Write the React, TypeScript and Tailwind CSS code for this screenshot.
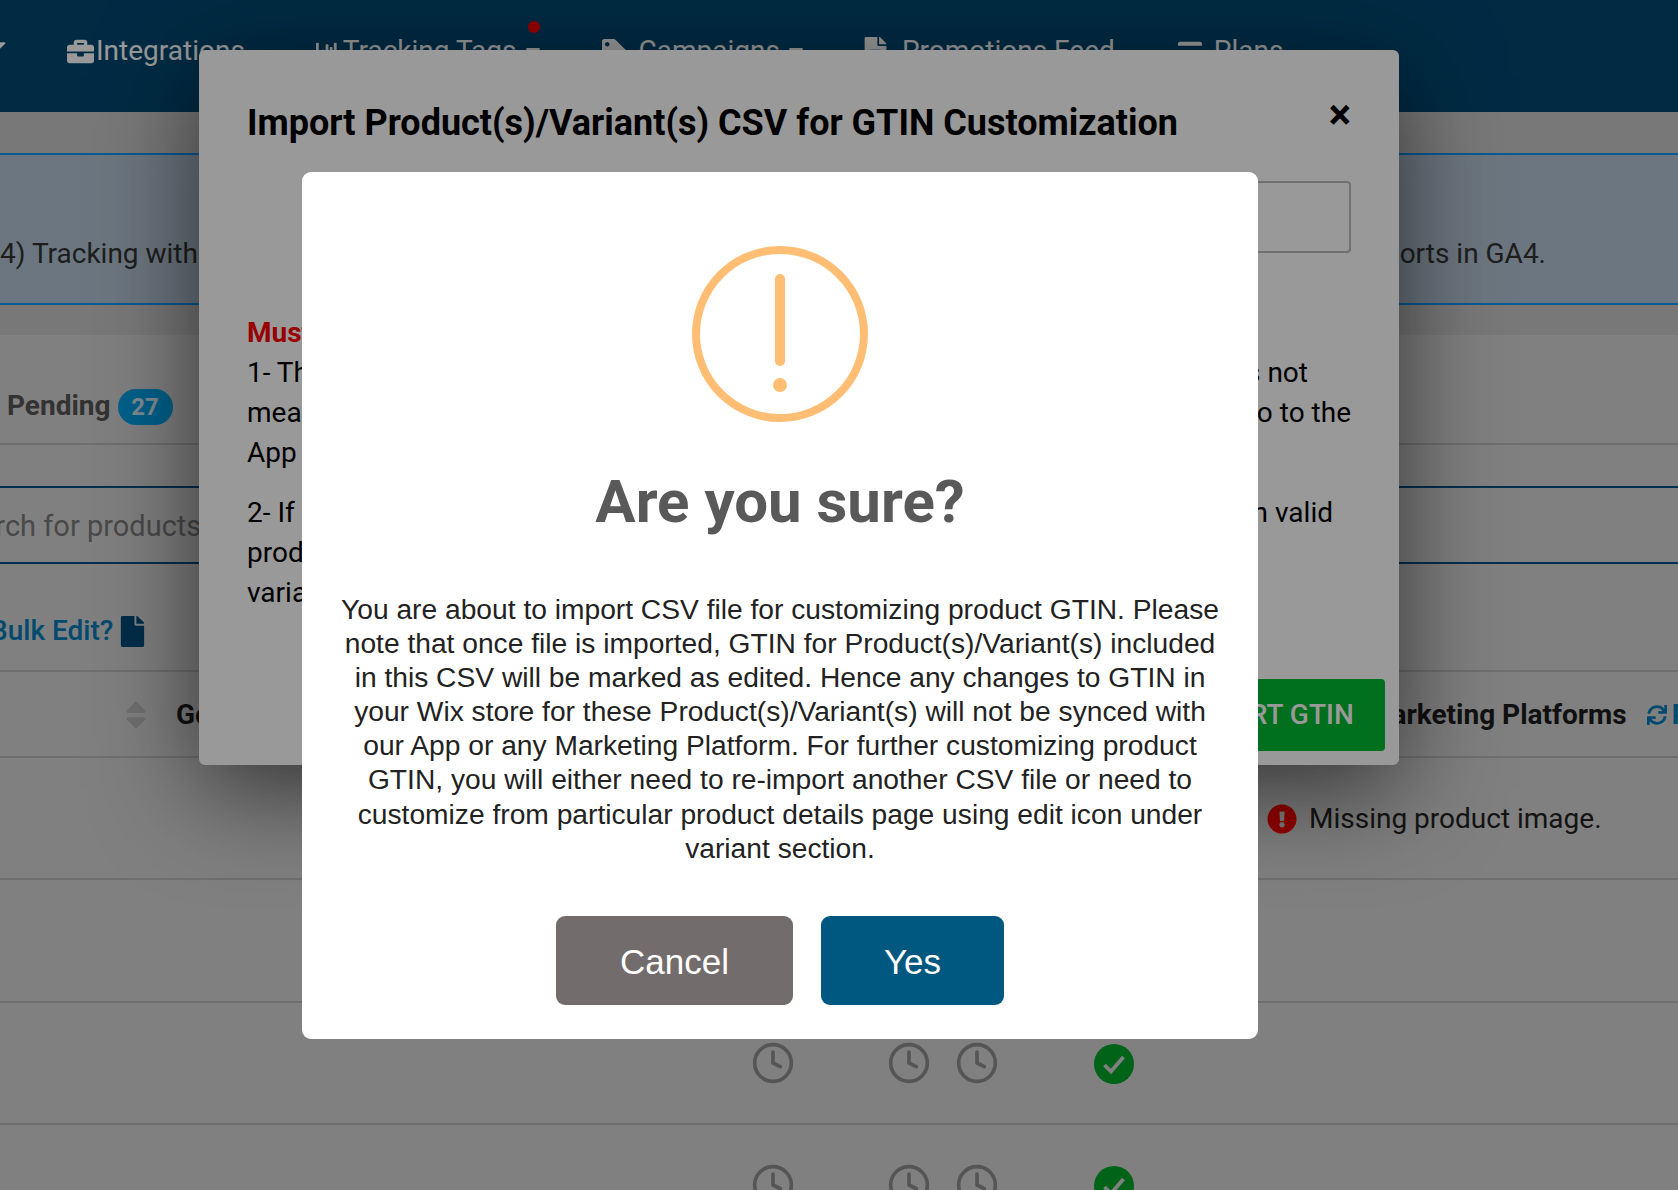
import { Clock } from "lucide-react";
import { FaBriefcase, FaCaretDown, FaChartBar, FaTag, FaFileAlt, FaCreditCard, FaFile, FaSync, FaSort, FaExclamationCircle } from "react-icons/fa";

function NavItem({ icon, label, caret, className }: { icon: React.ReactNode; label: string; caret?: boolean; className: string }) {
  return (
    <div className={`flex items-center text-[28px] text-white ${className}`}>
      {icon}
      <span>{label}</span>
      {caret && <FaCaretDown className="ml-1 text-[24px]" />}
    </div>
  );
}

function CheckBadge({ className }: { className: string }) {
  return (
    <svg width="40" height="40" viewBox="0 0 40 40" className={className}>
      <circle cx="20" cy="20" r="20" fill="#00a528" />
      <path d="M10.5 21l6.5 6.5L29.5 13" fill="none" stroke="#d5d5d5" strokeWidth="3.8" />
    </svg>
  );
}

function StatusRow({ className = "h-[122px]" }: { className?: string }) {
  return (
    <div className={`${className} border-b-2 border-[#b8b8b8] bg-[#d5d5d5] flex items-center pl-[751px] text-[#8e8e8e]`}>
      <Clock size={44} strokeWidth={2} />
      <Clock size={44} strokeWidth={2} className="ml-[92px]" />
      <Clock size={44} strokeWidth={2} className="ml-[24px]" />
      <CheckBadge className="ml-[95px] mt-[2px]" />
    </div>
  );
}

function SplitLine({ left, right, className = "" }: { left: string; right?: string; className?: string }) {
  return (
    <div className={`h-10 flex justify-between items-center whitespace-nowrap ${className}`}>
      <span>{left}</span>
      {right && <span>{right}</span>}
    </div>
  );
}

export default function App() {
  return (
    <div className="relative h-[1190px] w-full overflow-hidden bg-[#c9c9c9] font-['Roboto',sans-serif]">
      {/* Page */}
      <header className="h-[112px] bg-[#004871] flex items-start pt-[30px] whitespace-nowrap">
        <FaCaretDown className="ml-[-12px] mt-1 text-[22px] text-white" />
        <NavItem className="ml-[57px]" icon={<FaBriefcase className="mr-[2px] text-[27px]" />} label="Integrations" />
        <div className="relative ml-[71px]">
          <NavItem className="" icon={<FaChartBar className="mr-[5px] text-[22px]" />} label="Tracking Tags" caret />
          <span className="absolute right-[5px] top-[-9px] h-3 w-3 rounded-full bg-[#f90000]" />
        </div>
        <NavItem className="ml-[57px]" icon={<FaTag className="mr-[13px] text-[24px]" />} label="Campaigns" caret />
        <NavItem className="ml-[53px]" icon={<FaFileAlt className="mr-3 text-[29px]" />} label="Promotions Feed" />
        <NavItem className="ml-[63px]" icon={<FaCreditCard className="mr-3 text-[24px]" />} label="Plans" />
      </header>
      <div className="h-[41px]" />
      <section className="h-[152px] border-y-2 border-[#1196f7] bg-[#b4c5d5] flex items-center justify-between pt-[50px] pr-[132px] text-[28px] text-[#333] whitespace-nowrap">
        <span>4) Tracking with</span>
        <span>reports in GA4.</span>
      </section>
      <div className="h-[30px]" />
      <section className="bg-[#d5d5d5]">
        <div className="h-[110px] border-b-2 border-[#b8b8b8] flex items-center pl-[7px] pt-[34px] text-[28px] font-bold text-[#555]">
          Pending
          <span className="ml-[7px] mt-[2px] h-[36px] w-[55px] rounded-full bg-[#00a0e6] flex items-center justify-center text-[24px] text-[#d5e8f2]">27</span>
        </div>
        <div className="h-[41px]" />
        <div className="h-[78px] border-y-2 border-[#005085] flex items-center pt-1 text-[29px] text-[#7b7b7b] whitespace-nowrap ml-[-53px]">
          Search for products
        </div>
        <div className="h-[108px] border-b-2 border-[#b8b8b8] flex items-center pt-[28px] text-[28px] font-medium text-[#007cbb] whitespace-nowrap ml-[-10px]">
          Bulk Edit?
          <FaFile className="ml-1 text-[31px] text-[#004b7b]" />
        </div>
        <div className="h-[86px] overflow-hidden border-b-2 border-[#b8b8b8] flex items-center pt-[2px] whitespace-nowrap text-[28px] font-bold text-[#1c1c1c]">
          <FaSort className="ml-[119px] text-[34px] text-[#b9b9b9]" />
          <span className="ml-[23px]">Google</span>
          <span className="ml-auto">Marketing Platforms</span>
          <FaSync className="ml-5 text-[20px] text-[#007cbb] shrink-0" />
          <span className="ml-[5px] mr-[-92px] text-[#007cbb]">Refresh</span>
        </div>
        <div className="h-[122px] border-b-2 border-[#b8b8b8] flex items-center pl-[1267px] pt-[2px] text-[28px] text-[#222] whitespace-nowrap">
          <FaExclamationCircle size={30} className="mr-3 text-[#f90000]" />
          Missing product image.
        </div>
        <div className="h-[123px] border-b-2 border-[#b8b8b8]" />
        <StatusRow />
        <StatusRow />
      </section>

      {/* Import modal */}
      <div className="absolute left-[199px] top-[50px] h-[715px] w-[1200px] rounded-md bg-white shadow-[0_25px_100px_rgba(0,0,0,0.6)] px-[48px] text-black">
        <div className="flex justify-between pt-[50px]">
          <h2 className="text-[36px] leading-[46px] font-bold whitespace-nowrap">Import Product(s)/Variant(s) CSV for GTIN Customization</h2>
          <span className="mt-[-8px] mr-0 text-[42px] leading-[46px] font-bold">×</span>
        </div>
        <div className="mt-[35px] ml-auto h-[72px] w-[600px] rounded border-2 border-[#bbb]" />
        <div className="mt-[60px] text-[28px]">
          <SplitLine left="Must Read" className="font-bold text-[#ff0000]" />
          <SplitLine left="1- The" right="is not" className="pr-[43px]" />
          <SplitLine left="meaning" right="go to the" />
          <SplitLine left="App" className="mb-5" />
          <SplitLine left="2- If" right="in valid" className="pr-[18px]" />
          <SplitLine left="products" />
          <SplitLine left="variants" />
        </div>
        <div className="absolute right-[14px] top-[629px] flex h-[72px] w-[236px] items-center justify-center rounded bg-[#00b932] text-[28px] font-medium text-white">
          IMPORT GTIN
        </div>
      </div>

      {/* Dim layer */}
      <div className="absolute inset-0 bg-black/40" />

      {/* Confirm dialog */}
      <div className="absolute left-[302px] top-[172px] h-[867px] w-[956px] rounded-[9px] bg-white flex flex-col items-center pt-[74px]">
        <div className="relative h-[176px] w-[176px] rounded-full border-[8px] border-[#ffbe73]">
          <span className="absolute left-1/2 top-[20px] h-[92px] w-[10px] -translate-x-1/2 rounded-full bg-[#ffbe73]" />
          <span className="absolute left-1/2 top-[124px] h-[14px] w-[14px] -translate-x-1/2 rounded-full bg-[#ffbe73]" />
        </div>
        <h1 className="mt-[42px] text-[60px] leading-[76px] font-bold text-[#595959]">Are you sure?</h1>
        <p className="mt-[52px] text-center font-['Liberation_Sans',sans-serif] text-[28.2px] leading-[34.1px] text-[#222] whitespace-nowrap">
          You are about to import CSV file for customizing product GTIN. Please<br />
          note that once file is imported, GTIN for Product(s)/Variant(s) included<br />
          in this CSV will be marked as edited. Hence any changes to GTIN in<br />
          your Wix store for these Product(s)/Variant(s) will not be synced with<br />
          our App or any Marketing Platform. For further customizing product<br />
          GTIN, you will either need to re-import another CSV file or need to<br />
          customize from particular product details page using edit icon under<br />
          variant section.
        </p>
        <div className="mt-[51px] flex gap-[28px] font-['Liberation_Sans',sans-serif] text-[35px] text-white">
          <button className="h-[89px] w-[237px] rounded-[9px] bg-[#736c6c] pt-[3px]">Cancel</button>
          <button className="h-[89px] w-[183px] rounded-[9px] bg-[#005780] pt-[3px]">Yes</button>
        </div>
      </div>
    </div>
  );
}
